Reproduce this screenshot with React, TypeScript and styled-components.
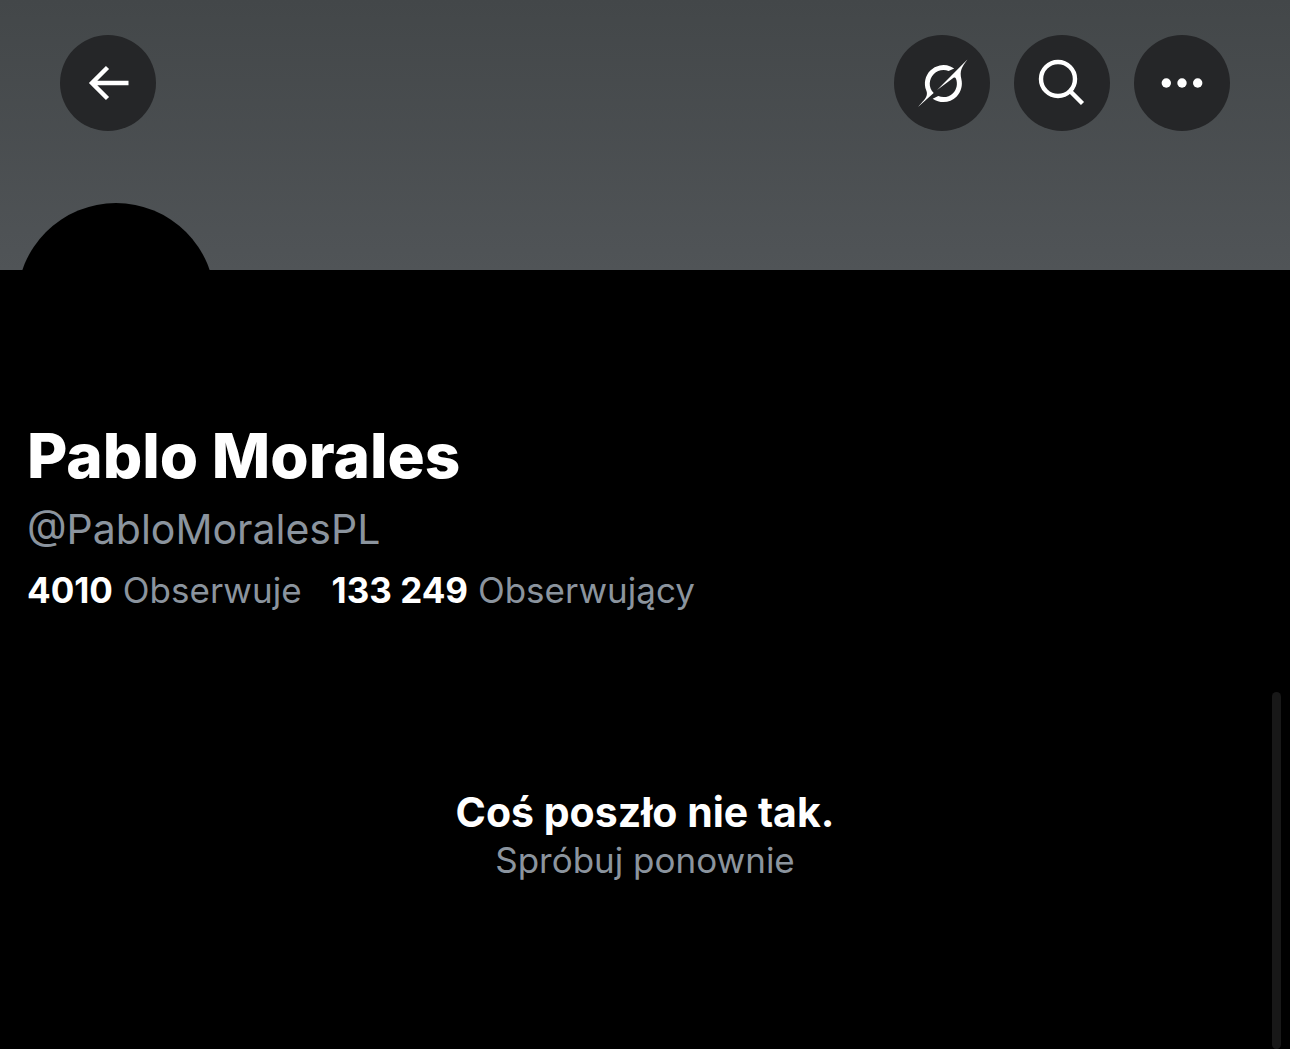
import React from "react";
import styled, { createGlobalStyle } from "styled-components";

const GlobalStyle = createGlobalStyle`
  * { box-sizing: border-box; }
  body {
    margin: 0;
    background: #000;
    color: #fff;
    font-family: Inter, "Liberation Sans", sans-serif;
  }
`;

const Page = styled.main`
  position: relative;
  min-height: 100vh;
  overflow: hidden;
`;

const Banner = styled.header`
  display: flex;
  justify-content: space-between;
  align-items: flex-start;
  height: 270px;
  padding: 35px 60px;
  background: linear-gradient(#434749, #505457);
`;

const Actions = styled.div`
  display: flex;
  gap: 24px;
`;

const RoundButton = styled.button`
  display: grid;
  place-items: center;
  width: 96px;
  height: 96px;
  padding: 0;
  border: 0;
  border-radius: 50%;
  background: #252628;
  color: #fff;
  cursor: pointer;
`;

const Icon = styled.svg`
  display: block;
  width: 96px;
  height: 96px;
`;

const Avatar = styled.div`
  width: 198px;
  height: 198px;
  margin: -67px 0 0 17px;
  border-radius: 50%;
  background: #000;
`;

const Profile = styled.section`
  padding: 17px 27px 0;
`;

const Name = styled.h1`
  margin: 0;
  font-size: 62px;
  line-height: 76px;
  font-weight: 800;
`;

const Handle = styled.p`
  margin: 9px 0 0;
  color: #8b949e;
  font-size: 41px;
  line-height: 52px;
`;

const Stats = styled.div`
  display: flex;
  flex-wrap: wrap;
  gap: 0 30px;
  margin-top: 11px;
`;

const StatLink = styled.a`
  color: #8b949e;
  font-size: 35px;
  line-height: 48px;
  text-decoration: none;
`;

const Count = styled.strong`
  color: #fff;
  font-weight: 700;
`;

const ErrorState = styled.section`
  display: flex;
  flex-direction: column;
  align-items: center;
  padding: 172px 28px 0;
`;

const ErrorTitle = styled.h2`
  margin: 0;
  font-size: 41px;
  line-height: 52px;
  font-weight: 700;
`;

const RetryButton = styled.button`
  padding: 0;
  border: 0;
  background: none;
  color: #8b949e;
  font: inherit;
  font-size: 35px;
  line-height: 44px;
  cursor: pointer;
`;

const ScrollThumb = styled.div`
  position: absolute;
  top: 66%;
  right: 9px;
  bottom: 0;
  width: 9px;
  border-radius: 5px;
  background: #181818;
`;

function BackIcon() {
  return (
    <Icon viewBox="0 0 96 96" fill="none" stroke="currentColor" strokeWidth="4.4" aria-hidden="true">
      <path d="M68.5 48H32M47.5 32.5L32 48l15.500 15.500" />
    </Icon>
  );
}

function GrokIcon() {
  return (
    <Icon viewBox="0 0 96 96" fill="currentColor" aria-hidden="true">
      <g transform="translate(24 23.500) scale(2.06)">
        <path d="M9.27 15.29l7.978-5.897c.391-.29.95-.177 1.137.272.98 2.369.542 5.215-1.41 7.169-1.951 1.954-4.667 2.382-7.149 1.406l-2.711 1.257c3.889 2.661 8.611 2.003 11.562-.953 2.341-2.344 3.066-5.539 2.388-8.42l.006.007c-.983-4.232.242-5.924 2.75-9.383.06-.082.12-.164.179-.248l-3.301 3.305v-.01L9.267 15.292M7.623 16.723c-2.792-2.67-2.31-6.801.071-9.184 1.761-1.763 4.647-2.483 7.166-1.425l2.705-1.25a7.808 7.808 0 00-1.829-1A8.975 8.975 0 005.984 5.83c-2.533 2.536-3.33 6.436-1.962 9.764 1.022 2.487-.653 4.246-2.34 6.022-.599.63-1.199 1.259-1.682 1.925l7.62-6.815" />
      </g>
    </Icon>
  );
}

function SearchIcon() {
  return (
    <Icon viewBox="0 0 96 96" fill="none" stroke="currentColor" strokeWidth="4.4" aria-hidden="true">
      <circle cx="44" cy="44" r="17" />
      <path d="M56 56l12.500 12.500" />
    </Icon>
  );
}

function MoreIcon() {
  return (
    <Icon viewBox="0 0 96 96" fill="currentColor" aria-hidden="true">
      <circle cx="32.300" cy="48" r="4.700" />
      <circle cx="48" cy="48" r="4.700" />
      <circle cx="63.700" cy="48" r="4.700" />
    </Icon>
  );
}

const stats = [
  { count: "4010", label: "Obserwuje" },
  { count: "133 249", label: "Obserwujący" },
];

export default function App() {
  return (
    <Page>
      <GlobalStyle />
      <Banner>
        <RoundButton aria-label="Wstecz"><BackIcon /></RoundButton>
        <Actions>
          <RoundButton aria-label="Grok"><GrokIcon /></RoundButton>
          <RoundButton aria-label="Szukaj"><SearchIcon /></RoundButton>
          <RoundButton aria-label="Więcej"><MoreIcon /></RoundButton>
        </Actions>
      </Banner>
      <Avatar />
      <Profile>
        <Name>Pablo Morales</Name>
        <Handle>@PabloMoralesPL</Handle>
        <Stats>
          {stats.map(({ count, label }) => (
            <StatLink href="#" key={label}>
              <Count>{count}</Count> {label}
            </StatLink>
          ))}
        </Stats>
      </Profile>
      <ErrorState>
        <ErrorTitle>Coś poszło nie tak.</ErrorTitle>
        <RetryButton>Spróbuj ponownie</RetryButton>
      </ErrorState>
      <ScrollThumb />
    </Page>
  );
}
